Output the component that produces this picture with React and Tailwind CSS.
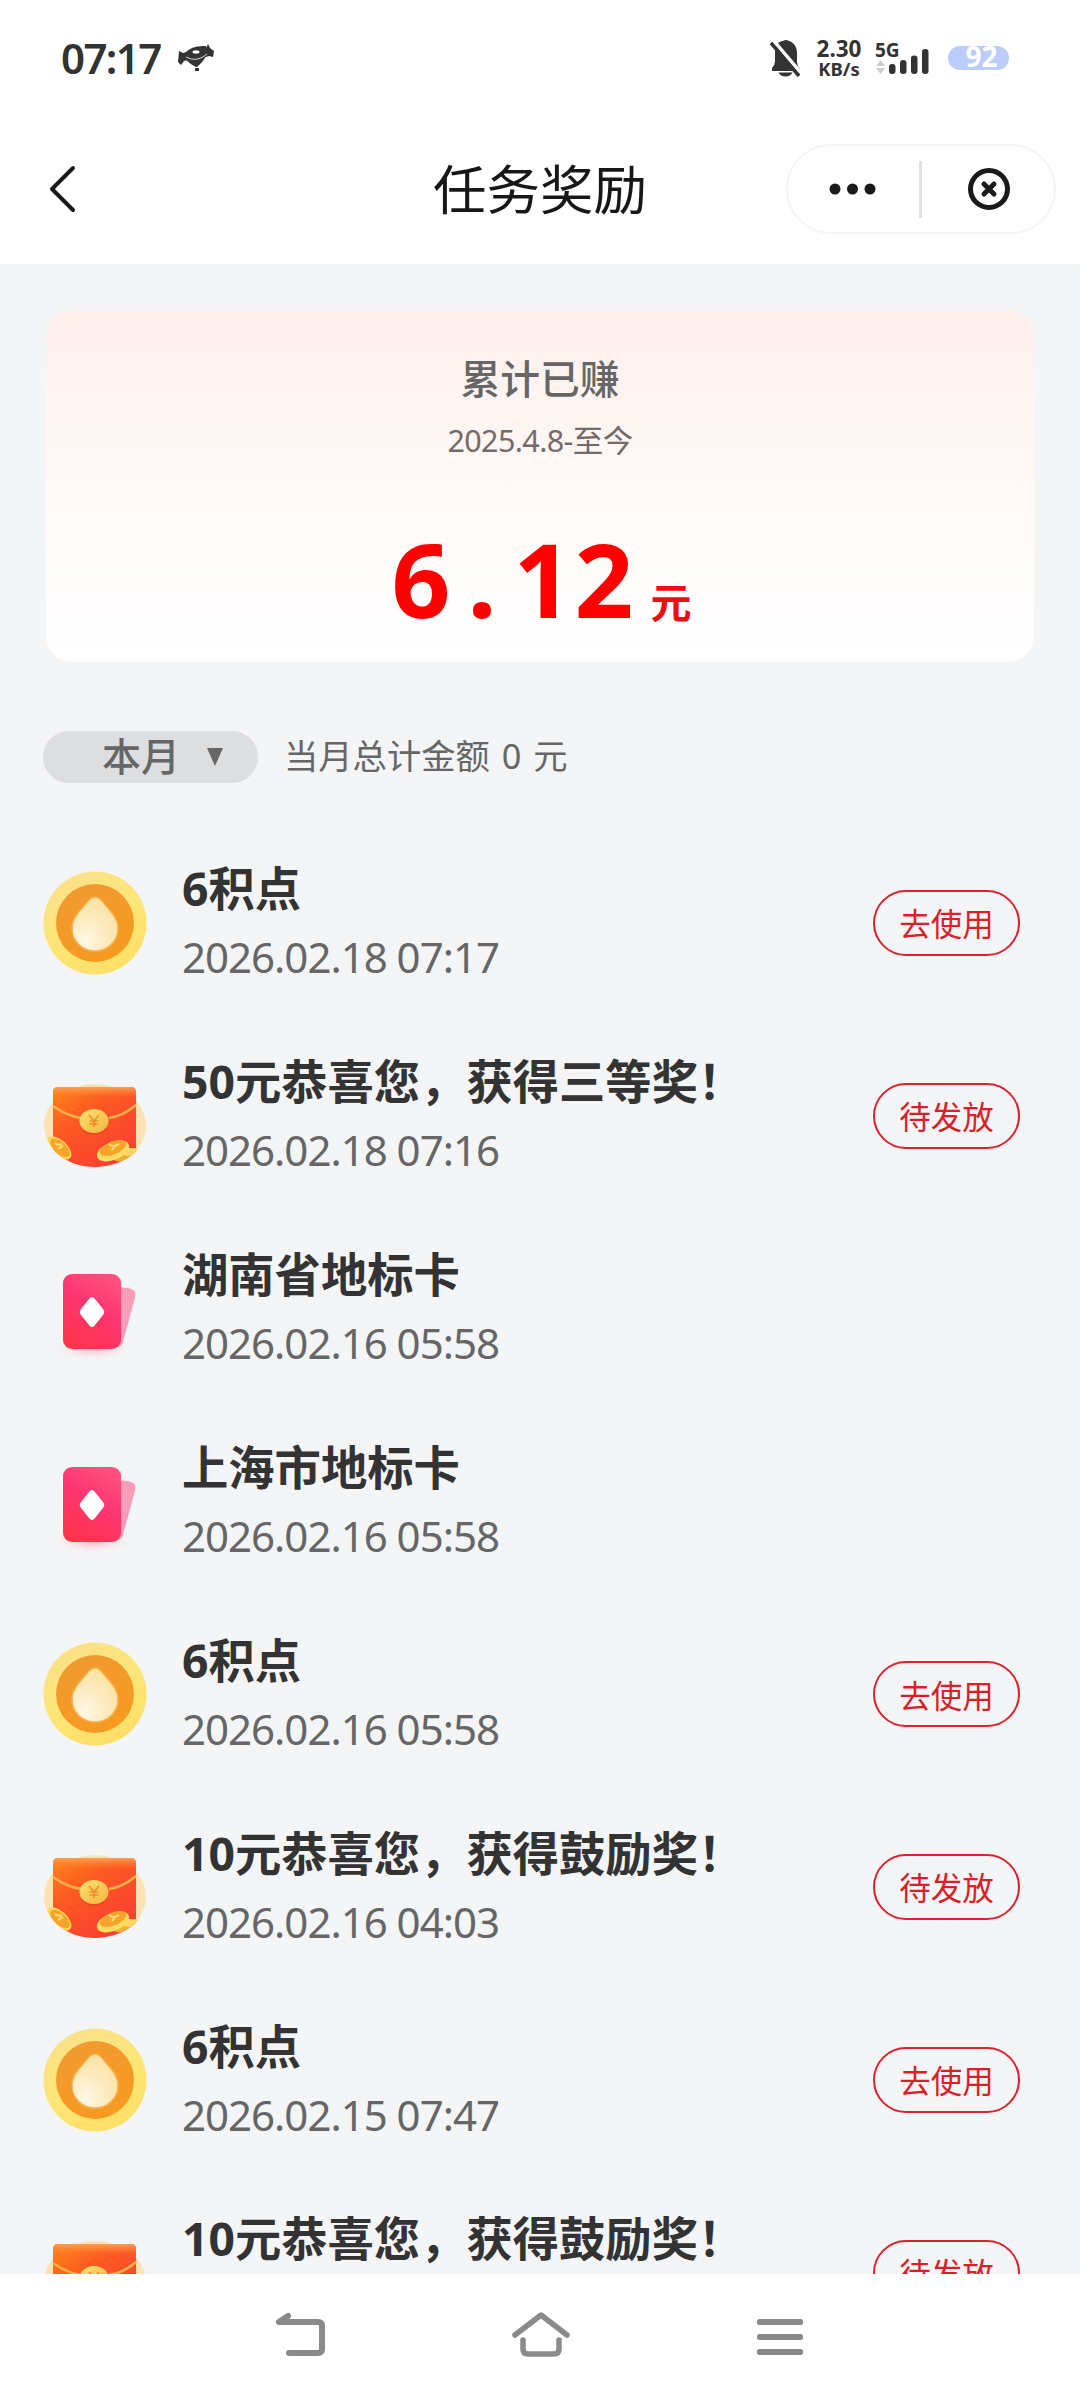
import React from 'react';

const CoinIcon = () => (
  <svg width="104" height="104" viewBox="0 0 104 104">
    <defs>
      <linearGradient id="rim" x1="0.2" y1="0" x2="0.7" y2="1">
        <stop offset="0" stopColor="#fbe08a" />
        <stop offset="0.5" stopColor="#fde678" />
        <stop offset="1" stopColor="#fddf66" />
      </linearGradient>
      <linearGradient id="core" x1="0" y1="0" x2="0.6" y2="1">
        <stop offset="0" stopColor="#f09a32" />
        <stop offset="1" stopColor="#f79a20" />
      </linearGradient>
      <radialGradient id="drop" cx="0.3" cy="0.8" r="0.9">
        <stop offset="0" stopColor="#fff8e6" />
        <stop offset="0.5" stopColor="#fdeabd" />
        <stop offset="1" stopColor="#fce2a0" />
      </radialGradient>
    </defs>
    <circle cx="52" cy="52" r="51.5" fill="url(#rim)" />
    <circle cx="52" cy="52" r="39" fill="url(#core)" />
    <path d="M46 29q6-6 12 0l11 13q6 8 6 15c0 13-10 23-23 23s-23-10-23-23q0-7 6-15z" fill="url(#drop)" stroke="#f7b455" strokeWidth="1.5" />
  </svg>
);

const EnvelopeIcon = () => (
  <svg width="104" height="104" viewBox="0 0 104 104">
    <defs>
      <linearGradient id="env" x1="0.1" y1="0" x2="0.8" y2="1">
        <stop offset="0" stopColor="#ff8218" />
        <stop offset="0.35" stopColor="#fc5a22" />
        <stop offset="1" stopColor="#fb3b34" />
      </linearGradient>
      <linearGradient id="envTop" x1="0" y1="0" x2="0" y2="1">
        <stop offset="0" stopColor="#ffa052" />
        <stop offset="1" stopColor="#ff7a2e" stopOpacity="0" />
      </linearGradient>
      <linearGradient id="gold" x1="0" y1="0" x2="1" y2="1">
        <stop offset="0" stopColor="#fde272" />
        <stop offset="1" stopColor="#f3b53e" />
      </linearGradient>
      <clipPath id="oval">
        <path d="M-2 18H106V62C103 86 80 103 52 103S3 86 1 62H-2z" />
      </clipPath>
    </defs>
    <ellipse cx="52" cy="61.500" rx="51" ry="41.500" fill="#fde2b4" />
    <g clipPath="url(#oval)">
      <path d="M10 28q0-5 5-5h73q5 0 5 5v59l-8 18H18l-8-18z" fill="url(#env)" />
      <path d="M10 28q0-5 5-5h73q5 0 5 5v6H10z" fill="url(#envTop)" />
      <path d="M10 42Q24 52 38 54M66 54Q80 52 93 41" fill="none" stroke="#fcb04c" strokeWidth="2.500" />
      <ellipse cx="51" cy="59" rx="14" ry="12" fill="#e33a20" opacity="0.5" />
      <ellipse cx="51" cy="57" rx="14.500" ry="12" fill="url(#gold)" />
      <path d="M46 51l5 6 5-6M51 57v6M46.500 57h9M46.500 60h9" fill="none" stroke="#f08f2c" strokeWidth="1.700" />
      <ellipse cx="16" cy="84" rx="15" ry="8" transform="rotate(42 16 84)" fill="#fbd75c" />
      <ellipse cx="17" cy="84" rx="12" ry="6" transform="rotate(42 17 84)" fill="#f8a428" />
      <path d="M12 79q3 3 7 1M15 85l5-3" stroke="#fddf72" strokeWidth="2" fill="none" />
      <ellipse cx="82" cy="93" rx="14" ry="5" fill="#f0b034" />
      <ellipse cx="89" cy="88" rx="13" ry="4" fill="#fbd75c" />
      <ellipse cx="70" cy="87" rx="17" ry="9" transform="rotate(-22 70 87)" fill="#fbdc62" />
      <ellipse cx="70" cy="84" rx="14" ry="6.500" transform="rotate(-22 70 84)" fill="#f8a428" />
      <path d="M66 80q4 4 10 0M69 86l3-4" stroke="#fddf72" strokeWidth="2" fill="none" />
    </g>
  </svg>
);

const CardIcon = () => (
  <svg width="104" height="104" viewBox="0 0 104 104">
    <defs>
      <linearGradient id="front" x1="0.7" y1="0" x2="0.2" y2="1">
        <stop offset="0" stopColor="#ff4f7e" />
        <stop offset="0.45" stopColor="#fe3470" />
        <stop offset="1" stopColor="#fe3548" />
      </linearGradient>
      <radialGradient id="cardShadow">
        <stop offset="0" stopColor="#fba9b8" />
        <stop offset="1" stopColor="#f4f5f7" stopOpacity="0" />
      </radialGradient>
    </defs>
    <ellipse cx="50" cy="91" rx="42" ry="13" fill="url(#cardShadow)" />
    <path d="M76 30l11 1.500q7 2 5 9L80 85q-2 5-6 5z" fill="#fa9db8" />
    <rect x="20" y="17" width="58" height="75" rx="9" fill="url(#front)" />
    <path d="M46 42q3-4 6 0l8 10q2.500 3 0 6l-8 10q-3 4-6 0l-8-10q-2.500-3 0-6z" fill="#fff" />
  </svg>
);

const icons = {
  coin: <CoinIcon />,
  envelope: <EnvelopeIcon />,
  card: <CardIcon />,
};

const rewards = [
  { id: 1, icon: 'coin', title: '6积点', date: '2026.02.18 07:17', action: '去使用' },
  { id: 2, icon: 'envelope', title: '50元恭喜您，获得三等奖！', date: '2026.02.18 07:16', action: '待发放' },
  { id: 3, icon: 'card', title: '湖南省地标卡', date: '2026.02.16 05:58' },
  { id: 4, icon: 'card', title: '上海市地标卡', date: '2026.02.16 05:58' },
  { id: 5, icon: 'coin', title: '6积点', date: '2026.02.16 05:58', action: '去使用' },
  { id: 6, icon: 'envelope', title: '10元恭喜您，获得鼓励奖！', date: '2026.02.16 04:03', action: '待发放' },
  { id: 7, icon: 'coin', title: '6积点', date: '2026.02.15 07:47', action: '去使用' },
  { id: 8, icon: 'envelope', title: '10元恭喜您，获得鼓励奖！', date: '2026.02.15 07:46', action: '待发放' },
];

const StatusBar = () => (
  <div className="flex h-[116px] items-center justify-between pl-[61px] pr-[71px] text-[#333]">
    <div className="flex items-center gap-[17px]">
      <span className="text-[42px] font-semibold leading-none tracking-[-1.6px]">07:17</span>
      <svg width="36" height="28" viewBox="0 0 36 28" fill="#333">
        <path d="M1 7l4 2 4-1 1 8-4 1-3 4-3-3zM28 4l2-4 2 4 4 3-1 6-4-1-3 1z" />
        <path d="M7 9Q14 1 28 2l1 9q-4 7-10 12h-1Q10 19 7 14z" />
        <ellipse cx="18" cy="8" rx="3.500" ry="1.700" fill="#fff" />
        <path d="M8 13q11 6 21-3" stroke="#fff" strokeWidth="0.8" fill="none" />
        <path d="M17 24h4v3h-4z" />
      </svg>
    </div>
    <div className="flex items-center">
      <svg width="31" height="38" viewBox="0 0 31 38">
        <path d="M2 32v-3q3-3 3-7v-8C5 6 9 2 13 2q3-2 6 0c4 1 8 5 8 12v9q0 4 3 7v2z" fill="#333" />
        <path d="M8.500 33.500h14q-2 4-7 4t-7-4z" fill="#333" />
        <path d="M3 1l28 33" stroke="#fff" strokeWidth="3.500" />
        <path d="M1 4l28 33" stroke="#333" strokeWidth="3.500" />
      </svg>
      <div className="ml-[13px] flex w-[50px] flex-col items-center font-bold">
        <span className="text-[22.5px] leading-[20px]">2.30</span>
        <span className="text-[18.5px] leading-[19px]">KB/s</span>
      </div>
      <div className="ml-[11px] flex h-[44px] w-[56px] flex-col justify-center">
        <span className="text-[19px] font-bold leading-[16px]">5G</span>
        <svg className="-mt-2.5" width="56" height="26" viewBox="0 0 56 26">
          <path d="M5.500 12l4.500 6H1zM5.500 26l4.500-6H1z" fill="#ccc" />
          <g fill="#333">
            <rect x="14" y="16" width="6.500" height="10" rx="3" />
            <rect x="25" y="12" width="6.500" height="14" rx="3" />
            <rect x="36" y="7.500" width="6.500" height="18.500" rx="3" />
            <rect x="47" y="1" width="6.500" height="25" rx="3" />
          </g>
        </svg>
      </div>
      <div className="ml-[17px] flex h-6 w-[61px] items-center justify-center rounded-full bg-[#bacdfb] pb-1 pl-1.5 text-[28px] font-bold leading-none text-white">
        92
      </div>
    </div>
  </div>
);

const Header = () => (
  <header className="grid h-[148px] grid-cols-3 items-center px-6 pb-2 pt-1.5">
    <svg className="ml-[22px]" width="32" height="50" viewBox="0 0 32 50">
      <path d="M27 4L6 25l21 21" fill="none" stroke="#1a1a1a" strokeWidth="4" strokeLinecap="round" strokeLinejoin="round" />
    </svg>
    <h1 className="pt-0.5 text-center text-[53.5px] leading-none text-[#171717]">任务奖励</h1>
    <div className="flex h-[90px] w-[270px] items-center justify-self-end rounded-full border-2 border-[#f5f5f5] pl-[39px]">
      <svg width="50" height="14" viewBox="0 0 50 14" fill="#1a1a1a">
        <circle cx="8" cy="7" r="5.500" />
        <circle cx="25.500" cy="7" r="5.500" />
        <circle cx="43" cy="7" r="5.500" />
      </svg>
      <div className="ml-[42px] h-[57px] w-[3px] bg-[#e0e0e0]" />
      <svg className="ml-[44px]" width="46" height="46" viewBox="0 0 46 46" fill="none" stroke="#1a1a1a" strokeWidth="5" strokeLinecap="round">
        <circle cx="23" cy="23" r="18.500" />
        <path d="M18 18l10 10M28 18L18 28" />
      </svg>
    </div>
  </header>
);

const SummaryCard = () => (
  <section className="mx-[46px] mt-[46px] flex h-[352px] flex-col items-center rounded-[26px] bg-gradient-to-b from-[#fff0eb] via-[#fff9f7] to-white pt-[48px]">
    <p className="text-[39.8px] font-medium leading-[42px] text-[#666]">累计已赚</p>
    <p className="mt-[24px] text-[30.5px] leading-[32px] tracking-[-0.6px] text-[#756a6a]">2025.4.8-至今</p>
    <div className="mt-[67px] flex items-baseline pl-0.5 font-bold text-[#fe0000]">
      {'6.12'.split('').map((char, index) => (
        <span key={index} className="w-[61px] text-center text-[103px] leading-[110px]">{char}</span>
      ))}
      <span className="ml-[16px] text-[41px] text-[#ea1010]">元</span>
    </div>
  </section>
);

const RewardRow = ({ reward }) => (
  <li className="flex h-[192.86px] shrink-0 items-center pl-[43px] pr-[60px]">
    <div className="h-[104px] w-[104px]">{icons[reward.icon]}</div>
    <div className="ml-[35px] flex-1 pt-[3px]">
      <p className="whitespace-nowrap text-[46.3px] font-bold leading-[66px] text-[#333]">{reward.title}</p>
      <p className="whitespace-nowrap text-[42px] leading-[70px] tracking-[-1px] text-[#666]">{reward.date}</p>
    </div>
    {reward.action && (
      <button className="h-[66px] w-[147px] rounded-full border-2 border-[#d9232d] pt-0.5 text-[31.5px] leading-none text-[#dc1e28]">
        {reward.action}
      </button>
    )}
  </li>
);

const NavBar = () => (
  <nav className="flex h-[126px] shrink-0 items-center justify-between bg-white pb-1.5 pl-[275px] pr-[276px]">
    <svg width="50" height="46" viewBox="0 0 50 46" fill="none" stroke="#8a8a8a" strokeWidth="6" strokeLinecap="round" strokeLinejoin="round">
      <path d="M13 5L4 11h39q4 0 4 4v23q0 4-4 4H14" />
    </svg>
    <svg width="60" height="48" viewBox="0 0 60 48" fill="none" stroke="#8a8a8a" strokeWidth="5.500" strokeLinecap="round" strokeLinejoin="round">
      <path d="M4 25L30 5l26 20M12 30v9q0 5 5 5h26q5 0 5-5v-9" />
    </svg>
    <svg width="48" height="46" viewBox="0 0 48 46" fill="#8a8a8a">
      <rect x="1" y="8" width="46" height="6" rx="2.500" />
      <rect x="1" y="23" width="46" height="6" rx="2.500" />
      <rect x="1" y="38" width="46" height="6" rx="2.500" />
    </svg>
  </nav>
);

const App = () => {
  return (
    <div className="flex h-[2400px] w-[1080px] flex-col overflow-hidden bg-white font-['Noto_Sans','Noto_Sans_CJK_SC',sans-serif]">
      <StatusBar />
      <Header />
      <main className="min-h-0 flex-1 overflow-hidden bg-[#f4f5f7]">
        <SummaryCard />
        <div className="mt-[69px] flex h-[52px] items-center pl-[43px] text-[#666]">
          <button className="flex h-[52px] w-[215px] items-center rounded-full bg-[#dddee0] pl-[59px]">
            <span className="pb-1 text-[39px] font-medium leading-none">本月</span>
            <svg className="ml-[27px]" width="16" height="18" viewBox="0 0 16 18">
              <path d="M0 0h16L8 18z" fill="#666" />
            </svg>
          </button>
          <p className="ml-[26px] pb-0.5 text-[34.3px] leading-none [word-spacing:3px]">当月总计金额 0 元</p>
        </div>
        <ul className="mt-[43.5px] flex flex-col">
          {rewards.map((reward) => (
            <RewardRow key={reward.id} reward={reward} />
          ))}
        </ul>
      </main>
      <NavBar />
    </div>
  );
};

export default App;
